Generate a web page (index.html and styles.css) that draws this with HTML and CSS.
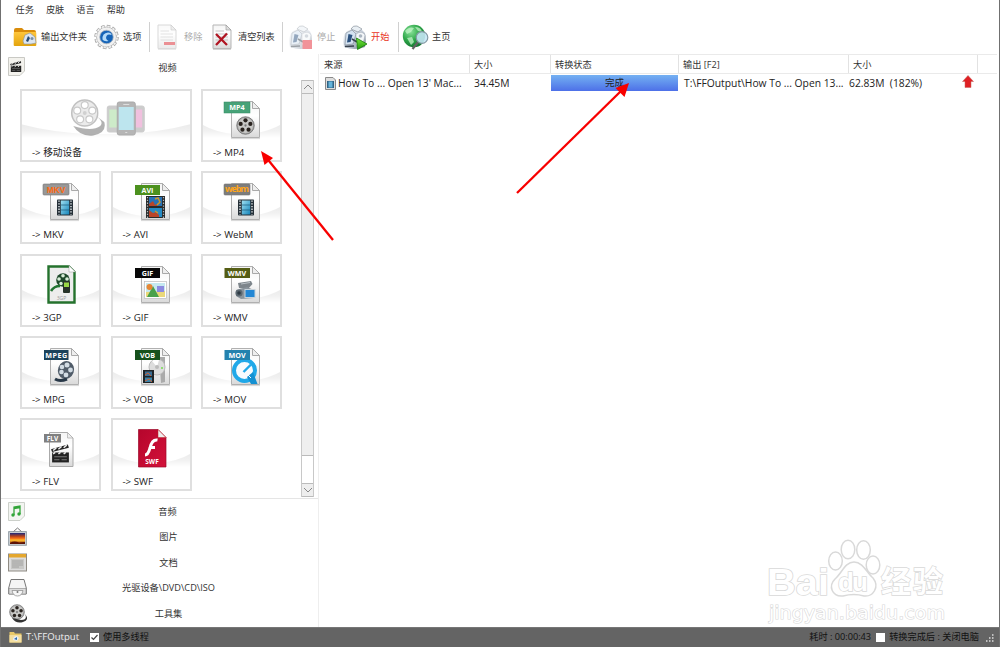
FILE: index.html
```html
<!DOCTYPE html>
<html lang="zh-CN">
<head>
<meta charset="utf-8">
<title>格式工厂</title>
<link rel="stylesheet" href="styles.css">
</head>
<body>
<svg class="defs" width="0" height="0">
  <defs>
    <linearGradient id="page" x1="0" y1="0" x2="0" y2="1"><stop offset="0" stop-color="#f4f4f4"/><stop offset=".4" stop-color="#fff"/><stop offset="1" stop-color="#d9d9d9"/></linearGradient>
    <linearGradient id="fade" x1="0" y1="0" x2="0" y2="1"><stop offset="0" stop-color="#ebebeb"/><stop offset=".5" stop-color="#f1f1f1"/><stop offset="1" stop-color="#fff"/></linearGradient>
    <linearGradient id="gold" x1="0" y1="0" x2="0" y2="1"><stop offset="0" stop-color="#ffc63c"/><stop offset="1" stop-color="#e3a40c"/></linearGradient>
    <linearGradient id="steel" x1="0" y1="0" x2="1" y2="1"><stop offset="0" stop-color="#f6f9fc"/><stop offset=".5" stop-color="#c3ccd8"/><stop offset="1" stop-color="#7e8996"/></linearGradient>
    <linearGradient id="sky" x1="0" y1="0" x2="1" y2="1"><stop offset="0" stop-color="#9fe0f2"/><stop offset="1" stop-color="#1685ba"/></linearGradient>
    <linearGradient id="red" x1="0" y1="0" x2="1" y2="1"><stop offset="0" stop-color="#b5052c"/><stop offset="1" stop-color="#d3123a"/></linearGradient>
    <linearGradient id="play" x1="0" y1="0" x2="0" y2="1"><stop offset="0" stop-color="#7be83f"/><stop offset="1" stop-color="#1f9a0c"/></linearGradient>
    <radialGradient id="globe" cx=".35" cy=".3" r=".8"><stop offset="0" stop-color="#8be39b"/><stop offset=".5" stop-color="#2fa84a"/><stop offset="1" stop-color="#0d6b2a"/></radialGradient>
    <linearGradient id="dusk" x1="0" y1="0" x2="0" y2="1"><stop offset="0" stop-color="#1b2a80"/><stop offset=".3" stop-color="#b8431c"/><stop offset=".5" stop-color="#f5761a"/><stop offset=".65" stop-color="#ffc22e"/><stop offset="1" stop-color="#8e1c08"/></linearGradient>
    <symbol id="sheet" viewBox="0 0 81 73">
      <path d="M30.500 12.500H51.500L58.500 19.500V48.500H30.500Z" fill="url(#page)" stroke="#b0b0b0"/>
      <path d="M51.500 12.500V19.500H58.500Z" fill="#eee" stroke="#a9a9a9"/>
      <path d="M30 49.600H59" stroke="#bbb" stroke-opacity=".6"/>
    </symbol>
    <symbol id="wave" viewBox="0 0 81 73" preserveAspectRatio="none">
      <path d="M0 35Q14 43 32 45H49Q67 43 81 35V49H0Z" fill="url(#fade)"/>
    </symbol>
    <symbol id="film" viewBox="0 0 16 16">
      <rect width="16" height="16" rx=".8" fill="#263038"/><rect x="3.800" y="1" width="8.400" height="14" fill="url(#sky)"/>
      <path d="M2 1V15M14 1V15" stroke="#e6edf0" stroke-width="1.400" stroke-dasharray="1.300 1.400"/><path d="M4 5.500H12M4 10.500H12" stroke="#17577a" stroke-width=".7"/>
    </symbol>
    <symbol id="reel" viewBox="0 0 20 20">
      <circle cx="10" cy="10" r="9.200" fill="#aaa" stroke="#666" stroke-width=".8"/><circle cx="10" cy="10" r="7.800" fill="#c8c8c6"/>
      <g fill="#29231f"><circle cx="10" cy="4.600" r="2.200"/><circle cx="15.100" cy="8.300" r="2.200"/><circle cx="13.200" cy="14.400" r="2.200"/><circle cx="6.800" cy="14.400" r="2.200"/><circle cx="4.900" cy="8.300" r="2.200"/></g><circle cx="10" cy="10" r="1.200" fill="#777"/>
    </symbol>
    <symbol id="spool" viewBox="0 0 29 29">
      <circle cx="14.500" cy="14.500" r="13.500" fill="#d4d4d4" stroke="#777" stroke-width="1.600"/>
      <g fill="#fff" stroke="#888" stroke-width="1.200"><circle cx="14.500" cy="6.300" r="3.600"/><circle cx="22.300" cy="12" r="3.600"/><circle cx="19.300" cy="21.100" r="3.600"/><circle cx="9.700" cy="21.100" r="3.600"/><circle cx="6.700" cy="12" r="3.600"/></g><circle cx="14.500" cy="14.500" r="2" fill="#999"/>
    </symbol>
    <symbol id="clap" viewBox="0 0 20 20">
      <path d="M2 9H18V18.500H2Z" fill="#222"/><path d="M1 6L17 1.500L18 4.500L2 8.600Z" fill="#222"/>
      <path d="M3 7.200L6 4.700M8 5.900L11 3.300M13 4.500L16 2M3 10.500L5 9M8 10.500L10 9M13 10.500L15 9" stroke="#eee" stroke-width="1.400"/><path d="M4 13H16M4 16H9M11 16H16" stroke="#777"/>
    </symbol>
    <symbol id="robot" viewBox="0 0 26 27">
      <path d="M2 23Q0 11 5 7Q13 3 20 6Q26 10 23 23Q13 27 2 23Z" fill="url(#steel)"/>
      <path d="M4 9L10 6L14 10L11 20L3 21Z" fill="#d5e3f1" stroke="#7a8591" stroke-width=".6"/><path d="M6.500 10L10.500 11L8.500 18L5 18.500Z" fill="#2c527f"/>
      <path d="M9 5Q11 1 15 2L20 5L16 8Z" fill="#e9eff4" stroke="#7a858f" stroke-width=".6"/><path d="M14 10Q20 6 23 11L21 20L14 21Z" fill="#f3f6f9" stroke="#9aa3ac" stroke-width=".5"/>
      <path d="M10 15L15 18M3 22.500L12 22" stroke="#39434e" stroke-width="1.600"/><circle cx="18.500" cy="12" r="1.800" fill="#aab5c1"/>
    </symbol>
    <symbol id="paper" viewBox="0 0 20 26">
      <path d="M1 1H14L19 6V24.500H1Z" fill="url(#page)" stroke="#b5b5b5"/><path d="M14 1V6H19Z" fill="#ddd" stroke="#999" stroke-width=".6"/><path d="M3.500 7H12M3.500 10H16M3.500 13H16M3.500 16H16" stroke="#b9b9b9" stroke-width=".8"/><path d="M1 25.300H19" stroke="#ccc"/>
    </symbol>
    <symbol id="folder" viewBox="0 0 24 20">
      <path d="M1 3Q1 1 3 1H9L11 3H21Q23 3 23 5V9H1Z" fill="#d98c0b"/><rect x=".7" y="5" width="22.600" height="14" rx="1" fill="url(#gold)"/>
      <path d="M10 14L12 8L17 6L22 10L23 16L18 17L11 17Z" fill="#dce5ef" stroke="#8a94a0" stroke-width=".6"/><path d="M13 14L15 9L17 11L15 15Z" fill="#274b75"/><circle cx="19" cy="11.500" r="1.500" fill="#758da9"/>
    </symbol>
  </defs>
</svg>
<div class="app">
  <nav class="menu"><span>任务</span><span>皮肤</span><span>语言</span><span>帮助</span></nav>
  <div class="toolbar">
    <svg width="24" height="20"><use href="#folder"/></svg><span>输出文件夹</span>
    <svg width="25" height="26" viewBox="0 0 25 26"><circle cx="12.500" cy="13" r="10.700" fill="none" stroke="#a0a0a0" stroke-width="3" stroke-dasharray="3.400 2.200"/><circle cx="12.500" cy="13" r="10" fill="#f1f1f1" stroke="#b0b0b0" stroke-width=".8"/><circle cx="12.500" cy="13" r="10.600" fill="none" stroke="#efefef" stroke-width="1.800" stroke-dasharray="2.400 3.150" stroke-dashoffset="-.5"/><circle cx="12.500" cy="13" r="6.800" fill="#1664b8" stroke="#b4b9bf" stroke-width=".8"/><path d="M8.500 15.500Q8 9 14 8.500Q17.500 8.500 17.500 11Q14 9.800 12.500 12Q11 15 14.500 17Q10 18 8.500 15.500Z" fill="#b5dbf9"/></svg><span>选项</span>
    <i class="sep"></i>
    <svg class="off" width="20" height="26"><use href="#paper"/><rect x="7" y="18" width="11" height="3" fill="#d8232c"/></svg><span class="dim">移除</span>
    <svg width="20" height="26"><use href="#paper"/><path d="M4 10L15 21M15 9.500L4 21" stroke="#b01522" stroke-width="2.300"/></svg><span>清空列表</span>
    <i class="sep"></i>
    <svg class="off" width="26" height="27"><use href="#robot"/><rect x="14.500" y="16" width="9.500" height="9" fill="#e52a35"/></svg><span class="dim">停止</span>
    <svg width="26" height="27"><use href="#robot"/><path d="M14.500 14L25 20L15.500 25.500Z" fill="url(#play)" stroke="#177b09" stroke-width=".8"/></svg><span class="go">开始</span>
    <i class="sep"></i>
    <svg width="27" height="27" viewBox="0 0 27 27"><circle cx="12" cy="12" r="11.200" fill="url(#globe)"/><path d="M3 7Q7 2 12 4L9 8L5 10ZM13 3Q19 3 20 8L16 7ZM5 14L10 13L12 18L9 21Z" fill="#c3f4c8" opacity=".75"/><path d="M16 18L10.500 25" stroke="#626262" stroke-width="2.200"/><circle cx="20" cy="13.500" r="5.800" fill="#c5e7f5" fill-opacity=".9" stroke="#8499a4" stroke-width="1.200"/></svg><span>主页</span>
  </div>
  <main class="main">
    <aside class="side">
      <div class="cat head"><svg width="17" height="19" viewBox="0 0 17 19"><path d="M.5.500H16.500V14L12 18.500H.5Z" fill="#f3f2ed" stroke="#c9c9c4"/><use href="#clap" x="1.500" y="2.500" width="13" height="14"/></svg><span>视频</span></div>
      <div class="browser">
        <div class="tiles">
          <div class="tile wide">
            <svg class="art" viewBox="0 0 171 73"><use href="#wave" width="171" height="73"/><g opacity=".45"><path d="M76 27Q84 33 80 37Q72 43 53 37Q60 48 73 46.500Q87 44 84 33Z" fill="#555"/><use href="#spool" x="50.500" y="10" width="28" height="28"/></g>
            <g stroke="#ccc"><rect x="87" y="17" width="15" height="26" rx="2" fill="#ccc"/><rect x="88.500" y="20" width="9" height="19" fill="#cdebc9"/><rect x="111" y="17" width="13" height="26" rx="2" fill="#ccc"/><rect x="114" y="20" width="8.500" height="19" fill="#f0c0de"/><rect x="97" y="13" width="18" height="33" rx="2" fill="#b5b5b5" stroke="#aaa"/></g><rect x="98.500" y="18" width="15" height="23" fill="#bde5ee"/><path d="M103 15.500H109M105 43.500H107" stroke="#ddd"/></svg>
            <span>-&gt; 移动设备</span>
          </div>
          <div class="tile"><svg class="art" viewBox="0 0 81 73"><use href="#wave"/><use href="#sheet"/><rect x="23" y="13" width="26" height="11" fill="#47a278" stroke="#318d63" stroke-width=".5"/><text class="tag" x="36" y="21.200">MP4</text><use href="#reel" x="35" y="27" width="19" height="19"/></svg><span>-&gt; MP4</span></div>
          <div class="tile"><svg class="art" viewBox="0 0 81 73"><use href="#wave"/><use href="#sheet"/><rect x="23" y="13" width="26" height="11" rx="1" fill="#989898" stroke="#777" stroke-width=".6"/><text class="tag orange" x="36" y="21.500">MKV</text><use href="#film" x="37" y="28" width="16" height="17"/></svg><span>-&gt; MKV</span></div>
          <div class="tile"><svg class="art" viewBox="0 0 81 73"><use href="#wave"/><use href="#sheet"/><rect x="24" y="14" width="25" height="10" fill="#4c911e"/><text class="tag" x="36.500" y="21.600">AVI</text><rect x="35" y="25" width="19" height="22" fill="#282b2c"/><rect x="38" y="26" width="13" height="9" fill="#2872b5"/><rect x="38" y="37" width="13" height="9" fill="#258ac3"/><path d="M38 33L42 30L44 34L46 33V35H38ZM38 39L42 42L45 41L48 44V46H38Z" fill="#b8452a"/><path d="M44 28L47 27L49 31L46 34M44 40L47 42" stroke="#c9962c" stroke-width="1.500" fill="none"/><path d="M36.500 26V47M52.500 26V47" stroke="#bbb" stroke-dasharray="1.300 1.500" stroke-width="1.200"/></svg><span>-&gt; AVI</span></div>
          <div class="tile"><svg class="art" viewBox="0 0 81 73"><use href="#wave"/><use href="#sheet"/><rect x="23" y="13" width="26" height="11" rx="1" fill="#7d7d7d" stroke="#777" stroke-width=".6"/><text class="tag amber" x="36" y="21.400" textLength="24">webm</text><use href="#film" x="37" y="28" width="16" height="17"/></svg><span>-&gt; WebM</span></div>
          <div class="tile"><svg class="art" viewBox="0 0 81 73"><use href="#wave"/><path d="M28.500 12.500H49L54.500 18V48.500H28.500Z" fill="#ededed" stroke="#24722d" stroke-width="2.400"/><path d="M49 11.500V18H55.500Z" fill="#fff" stroke="#999" stroke-width=".5"/><circle cx="43" cy="26" r="6.800" fill="#1e492b"/><g fill="#d7edd7"><circle cx="43" cy="21.800" r="1.800"/><circle cx="39" cy="25" r="1.800"/><circle cx="47" cy="25" r="1.800"/><circle cx="41" cy="29.500" r="1.700"/></g><path d="M40 32Q34 32 31 37" fill="none" stroke="#227332" stroke-width="2.500"/><rect x="43" y="27" width="7" height="12" rx="1" fill="#263229"/><rect x="44" y="28.500" width="5" height="4.500" fill="#98d746"/><text class="gp" x="41.500" y="46">3GP</text></svg><span>-&gt; 3GP</span></div>
          <div class="tile"><svg class="art" viewBox="0 0 81 73"><use href="#wave"/><use href="#sheet"/><rect x="24" y="14" width="25" height="10" fill="#080808"/><text class="tag" x="36.500" y="21.600">GIF</text><rect x="33.500" y="27.500" width="22" height="17" fill="#fff" stroke="#bbb" stroke-width=".7"/><rect x="35" y="29" width="19" height="14" fill="#c5e9f0"/><path d="M35 38L54 37V43H35Z" fill="#ead879"/><rect x="46" y="32" width="7" height="6" fill="#8c8ae0"/><path d="M42 32L36 43H48Z" fill="#49a14a"/><circle cx="38.500" cy="33" r="3" fill="#e68735"/></svg><span>-&gt; GIF</span></div>
          <div class="tile"><svg class="art" viewBox="0 0 81 73"><use href="#wave"/><use href="#sheet"/><rect x="23.500" y="14" width="25.500" height="10" fill="#545d14"/><text class="tag" x="36" y="21.600">WMV</text><path d="M37 29L50 27L51.500 30L47 35L38 34Z" fill="#7d858b"/><path d="M40 30L49 28.500" stroke="#b9c1c6"/><path d="M35 36L46 33L53 36V44L40 45L35 42Z" fill="#8a949c"/><circle cx="38" cy="39" r="3.600" fill="#5c6871"/><circle cx="38" cy="39" r="1.800" fill="#2d3a44"/><rect x="44" y="35.500" width="10" height="8" fill="#2387d4" stroke="#c6d2da"/></svg><span>-&gt; WMV</span></div>
          <div class="tile"><svg class="art" viewBox="0 0 81 73"><use href="#wave"/><use href="#sheet"/><rect x="24" y="14" width="24.500" height="10" fill="#1c435b"/><text class="tag" x="36.200" y="21.600" textLength="22">MPEG</text><g><ellipse cx="46" cy="34" rx="8" ry="9" transform="rotate(20 46 34)" fill="#505c69"/><g fill="#d2dce4"><circle cx="47" cy="29" r="2.500"/><circle cx="50.500" cy="34" r="2.400"/><circle cx="46" cy="39" r="2.400"/><circle cx="41.500" cy="36" r="2.300"/><circle cx="42" cy="31" r="2.300"/></g><path d="M47 43Q40 46 35 43" fill="none" stroke="#283848" stroke-width="3"/></g></svg><span>-&gt; MPG</span></div>
          <div class="tile"><svg class="art" viewBox="0 0 81 73"><use href="#wave"/><use href="#sheet"/><path d="M48 21H54V46L50 47Z" fill="#aaa"/><circle cx="46" cy="31" r="8" fill="#ddd" stroke="#bbb"/><path d="M46 31L41 25Q44 22 48 24Z" fill="#fff"/><circle cx="46" cy="31" r="2" fill="#bbb"/><circle cx="51" cy="32" r="1" fill="#75db4f"/><rect x="24" y="14" width="25" height="10" fill="#16511c"/><text class="tag" x="36.500" y="21.600">VOB</text><rect x="32" y="34" width="11" height="13" fill="#202427"/><rect x="34" y="35.500" width="7" height="4.500" fill="#3b6e94"/><rect x="34" y="41.500" width="7" height="4.500" fill="#3a83aa"/><path d="M34 39L37 37L40 40M34 45L38 43L41 46" stroke="#cc6033" fill="none"/></svg><span>-&gt; VOB</span></div>
          <div class="tile"><svg class="art" viewBox="0 0 81 73"><use href="#wave"/><use href="#sheet"/><circle cx="43.500" cy="34.500" r="10.500" fill="#f7fbfe" stroke="#20a8e8" stroke-width="4"/><path d="M46 41L52 36L56.500 48H50Z" fill="#1591d2"/><path d="M47 39L50 42" stroke="#f7fbfe" stroke-width="1"/><path d="M42.500 36L50 28.500" stroke="#20a8e8" stroke-width="2.400"/><rect x="23.500" y="14" width="25.500" height="10" fill="#2382ae"/><text class="tag" x="36" y="21.600">MOV</text></svg><span>-&gt; MOV</span></div>
          <div class="tile"><svg class="art" viewBox="0 0 81 73"><use href="#wave"/><path d="M29.500 14.500H47.500L53 20V48.500H29.500Z" fill="url(#page)" stroke="#aaa"/><path d="M47.500 14.500V20H53Z" fill="#eee" stroke="#aaa" stroke-width=".7"/><rect x="24" y="16" width="17" height="8.500" fill="#808080"/><text class="tag small" x="32.500" y="22.500">FLV</text><use href="#clap" x="30" y="25" width="21" height="21"/></svg><span>-&gt; FLV</span></div>
          <div class="tile"><svg class="art" viewBox="0 0 81 73"><use href="#wave"/><path d="M27.500 11.500H47L55 19.500V49H27.500Z" fill="url(#red)" stroke="#9b0a2a" stroke-width=".7"/><path d="M47 11.500V19.500H55Z" fill="#eee" stroke="#b22" stroke-width=".5"/><path d="M46.500 22Q41 21 39 30Q37 37 34 37M38 29.500H44" fill="none" stroke="#fff" stroke-width="3"/><text class="tag small" x="41" y="46">SWF</text></svg><span>-&gt; SWF</span></div>
        </div>
        <div class="scroll"><i class="btn"><svg width="10" height="8" viewBox="0 0 10 8"><path d="M1 6L5 2L9 6" fill="none" stroke="#888"/></svg></i><i class="thumb"></i><i class="trough"></i><i class="btn down"><svg width="10" height="8" viewBox="0 0 10 8"><path d="M1 2L5 6L9 2" fill="none" stroke="#888"/></svg></i></div>
      </div>
      <div class="cats">
        <div class="cat"><svg width="17" height="19" viewBox="0 0 17 19"><path d="M.5.500H16.500V14L12 18.500H.5Z" fill="#f3f5f1" stroke="#ccd0ca"/><path d="M6 13V5L12 4V12M6 6.500L12 5.500" fill="none" stroke="#32a539" stroke-width="1.300"/><circle cx="5" cy="13" r="1.700" fill="#32a539"/><circle cx="11" cy="12" r="1.700" fill="#32a539"/></svg><span>音频</span></div>
        <div class="cat"><svg width="19" height="19" viewBox="0 0 19 19"><path d="M5 5L9.500 1L14 5" fill="none" stroke="#777"/><rect x=".7" y="4.700" width="17.600" height="13.500" fill="#d8dde0" stroke="#8a969d"/><rect x="2" y="6" width="15" height="11" fill="url(#dusk)"/><path d="M2 16Q6 13.500 11 15.500L17 15V17H2Z" fill="#5c1408"/></svg><span>图片</span></div>
        <div class="cat"><svg width="19" height="19" viewBox="0 0 19 19"><rect x=".5" y="1" width="18" height="17" fill="#ddd" stroke="#8f8b83"/><path d="M1 1H18V4.500H1Z" fill="#e4a72e"/><rect x="3" y="6" width="13" height="10" fill="#c8c8c6"/><path d="M4 8H15M4 10H15M4 12H15M4 14H11" stroke="#999" stroke-width=".8"/></svg><span>文档</span></div>
        <div class="cat"><svg width="19" height="19" viewBox="0 0 19 19"><path d="M3 1.500H16L18.300 10V16H.7V10Z" fill="#f5f5f5" stroke="#777"/><path d="M1 10.500H18V16H1Z" fill="#ddd" stroke="#888" stroke-width=".6"/><path d="M4 12.500H15Q14 18 9.500 18T4 12.500Z" fill="#f6f6f6" stroke="#888" stroke-width=".7"/><circle cx="9.500" cy="14" r="1" fill="#777"/></svg><span>光驱设备\DVD\CD\ISO</span></div>
        <div class="cat"><svg width="19" height="19" viewBox="0 0 19 19"><use href="#reel" x="1" y="0" width="16" height="16"/><path d="M17 10Q20 16 13 16L4 14Q8 20 15 18T17 10Z" fill="#333"/></svg><span>工具集</span></div>
      </div>
    </aside>
    <section class="jobs">
      <div class="row th"><span>来源</span><span>大小</span><span>转换状态</span><span>输出 [F2]</span><span>大小</span><span></span></div>
      <div class="row td">
        <span class="source"><svg width="11" height="13" viewBox="0 0 11 13"><path d="M.5.500H8L10.500 3V12.500H.5Z" fill="#ddd" stroke="#8a8a8a"/><rect x="2" y="4" width="7" height="7" fill="#316486"/><rect x="3.500" y="4.500" width="4" height="6" fill="#66b4da"/></svg><b>How To ... Open 13' Mac...</b></span>
        <span class="s1">34.45M</span><span class="done">完成</span><span class="out">T:\FFOutput\How To ... Open 13...</span><span class="s2"><b>62.83M&nbsp; (182%)</b><svg width="12" height="13" viewBox="0 0 12 13"><path d="M6 .5L11.500 6.500H9V12.500H3V6.500H.5Z" fill="#df2024" stroke="#c5645f" stroke-width=".5"/></svg></span><span></span>
      </div>
    </section>
  </main>
  <footer class="status">
    <svg width="13" height="12" viewBox="0 0 13 12"><path d="M.5 1H5L6 2.500H12.500V11.500H.5Z" fill="#e9c969"/><path d="M.5 4H12.500V11.500H.5Z" fill="#f4dfa0"/><path d="M4 9Q4 5 8 5L10 7L8 10Z" fill="#e8eff8"/><path d="M5 8L8 6L8 9Z" fill="#316cac"/></svg>
    <span class="path">T:\FFOutput</span>
    <i class="check"><svg width="9" height="9" viewBox="0 0 9 9"><path d="M1.500 4.500L3.500 6.500L7.500 2" fill="none" stroke="#444" stroke-width="1.200"/></svg></i><span>使用多线程</span>
    <span class="time">耗时 : 00:00:43</span><i class="check"></i><span class="after">转换完成后 : 关闭电脑</span>
    <svg class="grip" width="9" height="9" viewBox="0 0 9 9"><path d="M7 1H8.500M4 4H5.500M7 4H8.500M1 7H2.500M4 7H5.500M7 7H8.500" stroke="#ddd" stroke-width="1.500"/></svg>
  </footer>
  <svg class="overlay" width="1000" height="647" viewBox="0 0 1000 647">
    <g fill="#fff" stroke="#d9d9d9" stroke-width="1.500">
      <text class="mark" x="767" y="595" textLength="62" lengthAdjust="spacingAndGlyphs">Bai</text>
      <ellipse cx="835.500" cy="561" rx="6.800" ry="9"/><ellipse cx="848" cy="549.500" rx="6.800" ry="9.300"/><ellipse cx="863.500" cy="550" rx="6.800" ry="9.300"/><ellipse cx="873" cy="565" rx="6.800" ry="9"/>
      <path d="M854 562C863 562 867 573 873 578C880 587 873 597 864 596Q854 593 843 596C832 597 828 586 835 579C842 573 845 562 854 562Z"/>
      <text class="mark du" x="838" y="591" textLength="30">du</text>
      <text class="mark cn" x="881" y="592" textLength="62">经验</text>
      <text class="mark url" x="769" y="619" textLength="176" lengthAdjust="spacingAndGlyphs">jingyan.baidu.com</text>
    </g>
    <g stroke="#f80000" stroke-width="2.300" fill="#f80000"><path d="M333 240L267 158.500"/><path d="M261 151L273 158L264.500 165Z" stroke="none"/><path d="M517 193L621 91"/><path d="M629 83L624.500 97L615.500 88Z" stroke="none"/></g>
  </svg>
</div>
</body>
</html>
```
FILE: styles.css
```css
* { box-sizing: border-box; }
body { margin: 0; background: #fff; font: 9.2px/12px "Open Sans", "Noto Sans CJK SC", sans-serif; color: #333; }
i { display: block; font-style: normal; }
b { font-weight: 400; }
svg { display: block; flex: none; }
.defs { position: absolute; }
.app { position: relative; display: flex; flex-direction: column; width: 1000px; height: 647px; overflow: hidden; border: solid #707070; border-width: 0 1px; white-space: nowrap; }
.menu { display: flex; gap: 12px; height: 20px; padding: 4px 0 0 14.5px; }
.toolbar { display: grid; grid-template-columns: 27px 54px 28px 26px 9px 26px 29px 25px 44px 7px 28px 26px 28px 27px 5px 29px auto; align-items: center; height: 34px; padding-left: 13px; }
.toolbar svg { margin-left: -1px; }
.sep { width: 1px; height: 30px; background: #d0d0d0; }
.off { opacity: .5; }
.dim { color: #aaa; }
.go { color: #e8341c; }
.main { display: flex; height: 573px; }
.side { display: flex; flex-direction: column; width: 318px; border-right: 1px solid #eee; }
.cat { display: flex; align-items: center; height: 25.5px; padding: 0 8px 0 7px; }
.cat span { flex: 1; text-align: center; padding: 1px 0 0; }
.head span { padding-top: 2px; }
.browser { display: flex; justify-content: space-between; height: 419px; padding-right: 4px; border-bottom: 1px solid #e5e5e5; }
.tiles { display: grid; grid-template-columns: repeat(3, 81px); grid-auto-rows: 73px; gap: 9.3px 9.5px; padding: 9.5px 0 0 19px; align-content: start; }
.tile { position: relative; display: flex; align-items: flex-end; padding: 0 0 3px 10px; color: #222; }
.tile::after { content: ""; position: absolute; inset: 0; border: 2px solid #dfdfdf; }
.tile span { position: relative; padding-left: 2px; font-size: 9.7px; }
.wide { grid-column: span 2; }
.art { position: absolute; inset: 0; width: 100%; height: 100%; }
.tag { font: 700 7.2px "Open Sans", sans-serif; fill: #fff; text-anchor: middle; }
.orange { font: 700 8.4px "Liberation Sans", sans-serif; fill: #ff6a10; }
.amber { font-size: 9px; fill: #ffa51a; }
.small { font-size: 6.5px; }
.gp { font: 5px "Open Sans", sans-serif; fill: #999; text-anchor: middle; }
.scroll { display: flex; flex-direction: column; width: 13px; height: 417px; border: solid #c8c8c8; border-width: 0 1px; background: #fff; }
.btn { display: flex; align-items: center; justify-content: center; height: 14px; background: #eee; border: solid #bbb; border-width: 1px 0; }
.thumb { height: 362px; background: #efefef; border-bottom: 1px solid #bbb; }
.trough { flex: 1; }
.cats { height: 128px; }
.jobs { flex: 1; padding-left: 1px; }
.row { display: grid; grid-template-columns: 150px 81px 128px 170px 129px 1fr; align-items: center; }
.th { height: 20px; border: solid #eaeaea; border-width: 1px 0; margin-right: 2px; }
.th span { height: 18px; padding: 4px 4px 0; border-right: 1px solid #e2e2e2; }
.th span:last-child { border: 0; }
.td { height: 18px; font-size: 10.3px; color: #222; }
.source { display: flex; align-items: center; gap: 2px; padding-left: 5px; }
.s1 { padding-left: 4px; }
.done { height: 16px; margin-right: 1px; text-align: center; line-height: 16px; font-size: 9.5px; background: linear-gradient(#74b1f2, #4d70e8); }
.out { padding-left: 5px; }
.s2 { display: flex; justify-content: space-between; align-items: center; }
.s2 svg { margin: -4px 4px 0 0; }
.status { display: flex; align-items: center; height: 20px; padding: 0 5px 1px 8px; background: #646464; border-top: 1px solid #777; color: #111; }
.path { width: 54px; margin-left: 4px; margin-right: 10px; color: #eee; font-size: 9.6px; }
.check { width: 9px; height: 9px; background: #fff; }
.check + span { margin-left: 4px; }
.time { margin-left: auto; margin-right: 5px; }
.after { margin-right: -1px; }
.grip { margin-left: 7px; align-self: flex-end; margin-bottom: 3px; }
.overlay { position: absolute; left: -1px; top: 0; pointer-events: none; }
.mark { font: 700 36px "Liberation Sans", sans-serif; paint-order: stroke; }
.du { font-size: 26px; }
.cn { font: 700 30px "Noto Sans CJK SC", sans-serif; }
.url { font: 400 18.500px "DejaVu Sans", sans-serif; stroke-width: 1.200px; }
```
